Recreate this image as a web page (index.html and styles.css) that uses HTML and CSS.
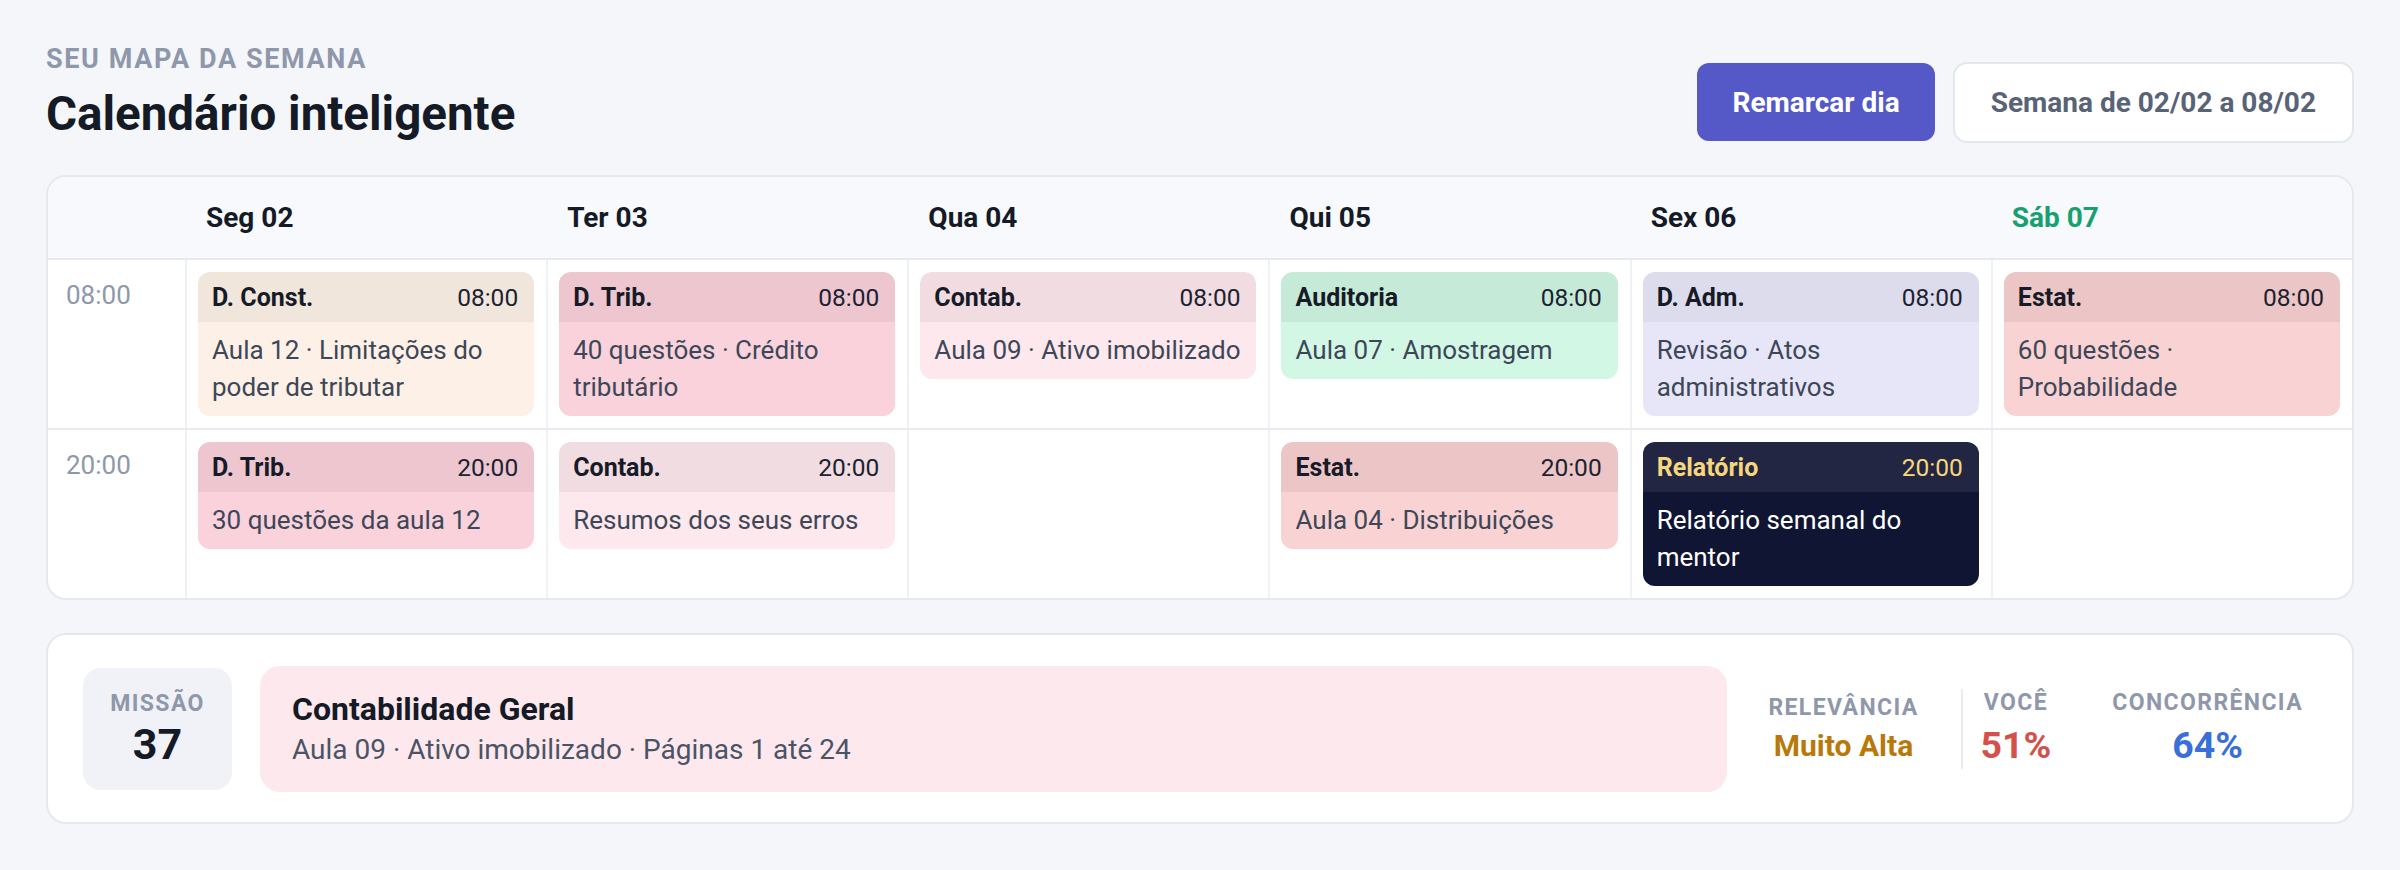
FILE: index.html
```html
<!DOCTYPE html>
<html lang="pt-BR">
<head>
<meta charset="utf-8">
<title>Calendário inteligente</title>
<link rel="stylesheet" href="styles.css">
</head>
<body>
<main class="page">
  <header class="top">
    <div class="heading">
      <div class="eyebrow">SEU MAPA DA SEMANA</div>
      <h1 class="title">Calendário inteligente</h1>
    </div>
    <div class="actions">
      <button class="btn btn-primary">Remarcar dia</button>
      <button class="btn btn-outline">Semana de 02/02 a 08/02</button>
    </div>
  </header>

  <section class="calendar">
    <div class="cal-head">
      <div></div>
      <div class="day">Seg 02</div>
      <div class="day">Ter 03</div>
      <div class="day">Qua 04</div>
      <div class="day">Qui 05</div>
      <div class="day">Sex 06</div>
      <div class="day day-today">Sáb 07</div>
    </div>

    <div class="cal-row">
      <div class="time">08:00</div>
      <div class="cell">
        <div class="ev ev-const">
          <div class="ev-head"><span class="ev-subj">D. Const.</span><span class="ev-time">08:00</span></div>
          <div class="ev-body">Aula 12 · Limitações do poder de tributar</div>
        </div>
      </div>
      <div class="cell">
        <div class="ev ev-trib">
          <div class="ev-head"><span class="ev-subj">D. Trib.</span><span class="ev-time">08:00</span></div>
          <div class="ev-body">40 questões · Crédito tributário</div>
        </div>
      </div>
      <div class="cell">
        <div class="ev ev-contab">
          <div class="ev-head"><span class="ev-subj">Contab.</span><span class="ev-time">08:00</span></div>
          <div class="ev-body">Aula 09 · Ativo imobilizado</div>
        </div>
      </div>
      <div class="cell">
        <div class="ev ev-aud">
          <div class="ev-head"><span class="ev-subj">Auditoria</span><span class="ev-time">08:00</span></div>
          <div class="ev-body">Aula 07 · Amostragem</div>
        </div>
      </div>
      <div class="cell">
        <div class="ev ev-adm">
          <div class="ev-head"><span class="ev-subj">D. Adm.</span><span class="ev-time">08:00</span></div>
          <div class="ev-body">Revisão · Atos administrativos</div>
        </div>
      </div>
      <div class="cell">
        <div class="ev ev-estat">
          <div class="ev-head"><span class="ev-subj">Estat.</span><span class="ev-time">08:00</span></div>
          <div class="ev-body">60 questões · Probabilidade</div>
        </div>
      </div>
    </div>

    <div class="cal-row">
      <div class="time">20:00</div>
      <div class="cell">
        <div class="ev ev-trib">
          <div class="ev-head"><span class="ev-subj">D. Trib.</span><span class="ev-time">20:00</span></div>
          <div class="ev-body">30 questões da aula 12</div>
        </div>
      </div>
      <div class="cell">
        <div class="ev ev-contab">
          <div class="ev-head"><span class="ev-subj">Contab.</span><span class="ev-time">20:00</span></div>
          <div class="ev-body">Resumos dos seus erros</div>
        </div>
      </div>
      <div class="cell"></div>
      <div class="cell">
        <div class="ev ev-estat">
          <div class="ev-head"><span class="ev-subj">Estat.</span><span class="ev-time">20:00</span></div>
          <div class="ev-body">Aula 04 · Distribuições</div>
        </div>
      </div>
      <div class="cell">
        <div class="ev ev-report">
          <div class="ev-head"><span class="ev-subj">Relatório</span><span class="ev-time">20:00</span></div>
          <div class="ev-body">Relatório semanal do mentor</div>
        </div>
      </div>
      <div class="cell"></div>
    </div>
  </section>

  <section class="mission">
    <div class="m-num">
      <div class="m-label">MISSÃO</div>
      <div class="m-value">37</div>
    </div>
    <div class="m-info">
      <div class="m-title">Contabilidade Geral</div>
      <div class="m-sub">Aula 09 · Ativo imobilizado · Páginas 1 até 24</div>
    </div>
    <div class="stats">
      <div class="stat stat-rel">
        <div class="stat-label">RELEVÂNCIA</div>
        <div class="stat-value v-rel">Muito Alta</div>
      </div>
      <div class="stat-divider"></div>
      <div class="stat stat-you">
        <div class="stat-label">VOCÊ</div>
        <div class="stat-value v-big v-you">51%</div>
      </div>
      <div class="stat stat-comp">
        <div class="stat-label">CONCORRÊNCIA</div>
        <div class="stat-value v-big v-comp">64%</div>
      </div>
    </div>
  </section>
</main>
</body>
</html>
```

FILE: styles.css
```css
* {
  box-sizing: border-box;
  margin: 0;
  padding: 0;
}

html, body {
  background: #f5f6fa;
}

body {
  font-family: Roboto, "Liberation Sans", Arial, sans-serif;
  color: #141a26;
}

.page {
  padding: 43px 46px 0;
}

/* ---------- header ---------- */
.top {
  display: flex;
  justify-content: space-between;
  align-items: flex-end;
}

.eyebrow {
  font-size: 27px;
  line-height: 32px;
  font-weight: 700;
  letter-spacing: 0.06em;
  color: #8f98ab;
}

.title {
  margin-top: 10.5px;
  font-size: 47.5px;
  line-height: 57px;
  font-weight: 700;
  color: #141a26;
}

.actions {
  display: flex;
  align-items: center;
  gap: 18px;
}

.btn {
  font-family: inherit;
  font-weight: 700;
  font-size: 28px;
  cursor: pointer;
}

.btn-primary {
  height: 78px;
  padding: 0 35px;
  background: #5559c8;
  color: #ffffff;
  border: 0;
  border-radius: 12px;
}

.btn-outline {
  height: 81px;
  padding: 0 36px;
  background: #ffffff;
  color: #596378;
  border: 2px solid #e3e7ee;
  border-radius: 14px;
}

/* ---------- calendar ---------- */
.calendar {
  margin-top: 32px;
  background: #ffffff;
  border: 2px solid #e4e8ef;
  border-radius: 20px;
  overflow: hidden;
}

.cal-head,
.cal-row {
  display: grid;
  grid-template-columns: 137px repeat(6, 1fr);
}

.cal-head {
  height: 83px;
  align-items: center;
  background: #f8f9fc;
  border-bottom: 2px solid #e6eaf0;
}

.day {
  padding-left: 21px;
  font-size: 28px;
  font-weight: 700;
  color: #141a26;
}

.day-today {
  color: #17a070;
}

.cal-row + .cal-row {
  border-top: 2px solid #e8ebf0;
}

.time {
  padding: 17px 0 0 18px;
  font-size: 26px;
  line-height: 36px;
  color: #8e98aa;
}

.cell {
  border-left: 2px solid #eef1f5;
  padding: 12px 12px 12px 11px;
}

.ev {
  border-radius: 12px;
  overflow: hidden;
}

.ev-head {
  height: 50px;
  display: flex;
  justify-content: space-between;
  align-items: center;
  padding: 2px 16px 0 14px;
  font-size: 25px;
}

.ev-subj {
  font-weight: 700;
  color: #161b27;
}

.ev-time {
  font-size: 24.5px;
  color: #1c2230;
}

.ev-body {
  padding: 10px 10px 10px 14px;
  font-size: 26px;
  line-height: 37px;
  color: #3d4757;
}

.ev-const .ev-head { background: #f0e6dc; }
.ev-const .ev-body { background: #fdf1e7; }

.ev-trib .ev-head { background: #edc6d0; }
.ev-trib .ev-body { background: #f9d2dc; }

.ev-contab .ev-head { background: #f0dce1; }
.ev-contab .ev-body { background: #fde8ed; }

.ev-aud .ev-head { background: #c5ead8; }
.ev-aud .ev-body { background: #d2f7e5; }

.ev-adm .ev-head { background: #dcdcec; }
.ev-adm .ev-body { background: #e7e6f9; }

.ev-estat .ev-head { background: #ecc6c6; }
.ev-estat .ev-body { background: #f9d3d3; }

.ev-report .ev-head { background: #222642; }
.ev-report .ev-body { background: #0f1532; color: #ffffff; }
.ev-report .ev-subj,
.ev-report .ev-time { color: #f6d67e; }

/* ---------- mission ---------- */
.mission {
  margin-top: 33px;
  display: flex;
  align-items: center;
  background: #ffffff;
  border: 2px solid #e4e8ef;
  border-radius: 20px;
  padding: 31px 35px 30px;
}

.m-num {
  width: 149px;
  height: 122px;
  flex: none;
  border-radius: 18px;
  background: #f0f2f7;
  display: flex;
  flex-direction: column;
  align-items: center;
  justify-content: center;
  gap: 2px;
}

.m-label {
  font-size: 23px;
  line-height: 28px;
  font-weight: 700;
  letter-spacing: 0.06em;
  color: #8f98ab;
}

.m-value {
  font-size: 43px;
  line-height: 48px;
  font-weight: 700;
  color: #141a26;
}

.m-info {
  flex: 1;
  margin-left: 28px;
  background: #fde8ed;
  border-radius: 20px;
  padding: 24px 32px;
}

.m-title {
  font-size: 32px;
  line-height: 38px;
  font-weight: 700;
  color: #141a26;
}

.m-sub {
  margin-top: 4px;
  font-size: 28px;
  line-height: 36px;
  color: #4a5466;
}

.stats {
  display: flex;
  align-items: center;
  margin-left: 23px;
}

.stat {
  padding: 0 18px;
  text-align: center;
  display: flex;
  flex-direction: column;
  gap: 6px;
}

.stat-label {
  font-size: 23px;
  line-height: 28px;
  font-weight: 700;
  letter-spacing: 0.06em;
  color: #8f98ab;
}

.stat-value {
  font-size: 30px;
  line-height: 36px;
  font-weight: 700;
}

.v-big {
  font-size: 37.5px;
  line-height: 45px;
}

.v-rel { color: #b8790a; }
.v-you { color: #d4514b; }
.v-comp { color: #3a6fd8; }

.stat-divider {
  width: 2px;
  height: 80px;
  margin-left: 24px;
  background: #e8ebf1;
}

.stat-comp {
  margin-left: 25px;
  padding-right: 14px;
}
```
